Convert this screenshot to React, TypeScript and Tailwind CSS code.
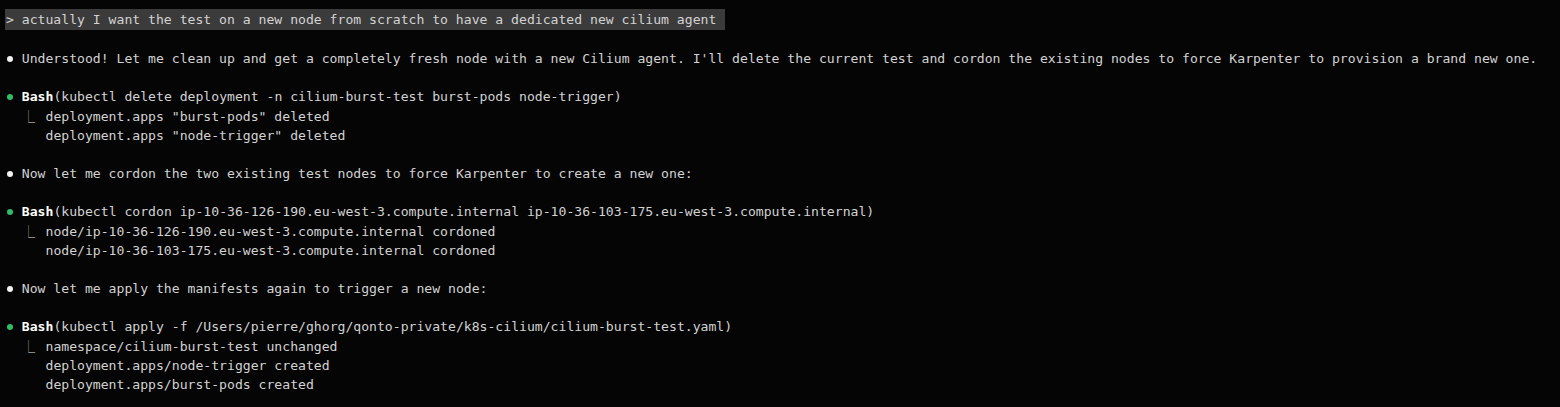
const mono = "font-['DejaVu_Sans_Mono','Liberation_Mono',monospace]";

type Line =
  | { kind: "blank" }
  | { kind: "say"; text: string }
  | { kind: "bash"; cmd: string }
  | { kind: "out"; text: string; first?: boolean };

const lines: Line[] = [
  { kind: "blank" },
  {
    kind: "say",
    text: "Understood! Let me clean up and get a completely fresh node with a new Cilium agent. I'll delete the current test and cordon the existing nodes to force Karpenter to provision a brand new one.",
  },
  { kind: "blank" },
  { kind: "bash", cmd: "kubectl delete deployment -n cilium-burst-test burst-pods node-trigger" },
  { kind: "out", text: 'deployment.apps "burst-pods" deleted', first: true },
  { kind: "out", text: 'deployment.apps "node-trigger" deleted' },
  { kind: "blank" },
  { kind: "say", text: "Now let me cordon the two existing test nodes to force Karpenter to create a new one:" },
  { kind: "blank" },
  {
    kind: "bash",
    cmd: "kubectl cordon ip-10-36-126-190.eu-west-3.compute.internal ip-10-36-103-175.eu-west-3.compute.internal",
  },
  { kind: "out", text: "node/ip-10-36-126-190.eu-west-3.compute.internal cordoned", first: true },
  { kind: "out", text: "node/ip-10-36-103-175.eu-west-3.compute.internal cordoned" },
  { kind: "blank" },
  { kind: "say", text: "Now let me apply the manifests again to trigger a new node:" },
  { kind: "blank" },
  { kind: "bash", cmd: "kubectl apply -f /Users/pierre/ghorg/qonto-private/k8s-cilium/cilium-burst-test.yaml" },
  { kind: "out", text: "namespace/cilium-burst-test unchanged", first: true },
  { kind: "out", text: "deployment.apps/node-trigger created" },
  { kind: "out", text: "deployment.apps/burst-pods created" },
];

function Dot({ green }: { green?: boolean }) {
  return (
    <span className="inline-flex w-[15.8px] items-center">
      <span
        className={`ml-[1px] inline-block h-[6px] w-[6px] rounded-full ${green ? "bg-[#2fbd6a]" : "bg-[#f2f2f2]"}`}
      />
    </span>
  );
}

export default function App() {
  return (
    <div className={`${mono} min-h-[407px] w-full bg-[#050505] pt-[9px] pl-[5px] text-[13.12px] leading-[19.16px] text-[#d2d2d2]`}>
      <div>
        <span className="inline-block h-[21px] bg-[#3b3b3b] pl-[1px] pr-[9px] leading-[21px] whitespace-pre">
          {"> actually I want the test on a new node from scratch to have a dedicated new cilium agent"}
        </span>
      </div>
      {lines.map((l, i) => {
        if (l.kind === "blank") return <div key={i} className="h-[19.16px]" />;
        if (l.kind === "say")
          return (
            <div key={i} className="flex items-center whitespace-pre pl-[1px]">
              <Dot />
              <span>{l.text}</span>
            </div>
          );
        if (l.kind === "bash")
          return (
            <div key={i} className="flex items-center whitespace-pre pl-[1px]">
              <Dot green />
              <span className="font-bold text-white">Bash</span>
              <span>({l.cmd})</span>
            </div>
          );
        return (
          <div key={i} className="flex whitespace-pre pl-[1px]">
            <span className="w-[15.8px]" />
            <span className="w-[23.7px] text-[#8a8a8a]">{l.first ? "⎿" : ""}</span>
            <span>{l.text}</span>
          </div>
        );
      })}
    </div>
  );
}
